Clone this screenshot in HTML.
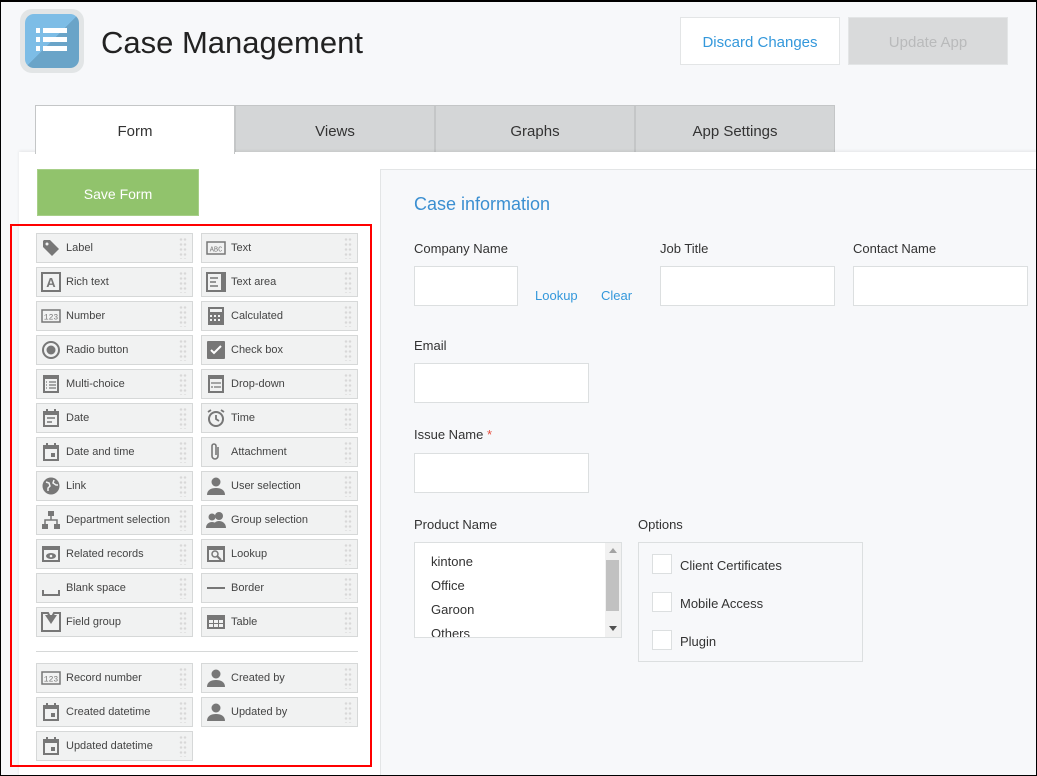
<!DOCTYPE html>
<html><head><meta charset="utf-8"><style>
*{box-sizing:border-box;margin:0;padding:0}
body{width:1037px;height:776px;overflow:hidden;background:#f7f8fa;font-family:"Liberation Sans",sans-serif;color:#333;position:relative}
.frame{position:absolute;left:0;top:0;width:1037px;height:776px;border:1px solid #000;border-top-width:2px;z-index:10;pointer-events:none}
.abs{position:absolute}
.tab{position:absolute;top:105px;height:48px;width:200px;background:#d4d6d7;border:1px solid #c4c6c7;border-bottom:none;text-align:center;line-height:52px;font-size:15px;color:#333}
.item{position:absolute;width:157px;height:30px;background:#f1f2f2;border:1px solid #d6d8d8;font-size:11px;color:#444;line-height:29px;padding-left:29px}
.item svg{position:absolute;left:4px;top:4px}
.item .grip{position:absolute;right:5px;top:3px;width:8px;height:22px;background-image:radial-gradient(circle,#d8d8d8 0.8px,transparent 1.6px);background-size:4px 5px}
.lbl{position:absolute;font-size:13px;color:#333}
.inp{position:absolute;background:#fff;border:1px solid #dcdfe0;height:40px}
.cb{position:absolute;left:13px;width:20px;height:20px;background:#fff;border:1px solid #dcdfe0}
</style></head><body>
<div class="frame"></div>
<div class="abs" style="left:20px;top:9px;width:64px;height:64px;border-radius:12px;background:#e2e5e6"></div>
<div class="abs" style="left:25px;top:14px;width:54px;height:54px;border-radius:9px;background:linear-gradient(135deg,#7dbde6 50%,#6aa4c8 50%)">
<svg width="54" height="54"><rect x="11" y="14" width="4" height="5" fill="#fff"/><rect x="18" y="14" width="24" height="5" fill="#fff"/><rect x="11" y="23" width="4" height="5" fill="#fff"/><rect x="18" y="23" width="24" height="5" fill="#fff"/><rect x="11" y="32" width="4" height="5" fill="#fff"/><rect x="18" y="32" width="24" height="5" fill="#fff"/></svg></div>
<div class="abs" style="left:101px;top:25px;font-size:31px;color:#222">Case Management</div>
<div class="abs" style="left:680px;top:17px;width:160px;height:48px;background:#fff;border:1px solid #e3e5e6;color:#3498db;font-size:15px;text-align:center;line-height:50px">Discard Changes</div>
<div class="abs" style="left:848px;top:17px;width:160px;height:48px;background:#d9dadb;border:1px solid #e3e5e6;color:#b9babb;font-size:15px;text-align:center;line-height:50px">Update App</div>
<div class="tab" style="left:35px;background:#fff;height:49px;z-index:2">Form</div>
<div class="tab" style="left:235px">Views</div>
<div class="tab" style="left:435px">Graphs</div>
<div class="tab" style="left:635px">App Settings</div>
<div class="abs" style="left:19px;top:152px;width:1018px;height:624px;background:#fff;box-shadow:0 -1px 3px rgba(0,0,0,.08)"></div>
<div class="abs" style="left:37px;top:169px;width:162px;height:47px;background:#91c36c;border:1px solid #a7cf88;color:#fff;font-size:14px;text-align:center;line-height:48px">Save Form</div>
<div class="abs" style="left:380px;top:169px;width:657px;height:607px;background:#f7f8fa;border-left:1px solid #e3e5e6;border-top:1px solid #e3e5e6"></div>
<div class="abs" style="left:414px;top:194px;font-size:18px;color:#3b8fd1">Case information</div>
<div class="lbl" style="left:414px;top:241px">Company Name</div>
<div class="inp" style="left:414px;top:266px;width:104px"></div>
<div class="lbl" style="left:535px;top:288px;color:#3498db">Lookup</div>
<div class="lbl" style="left:601px;top:288px;color:#3498db">Clear</div>
<div class="lbl" style="left:660px;top:241px">Job Title</div>
<div class="inp" style="left:660px;top:266px;width:175px"></div>
<div class="lbl" style="left:853px;top:241px">Contact Name</div>
<div class="inp" style="left:853px;top:266px;width:175px"></div>
<div class="lbl" style="left:414px;top:338px">Email</div>
<div class="inp" style="left:414px;top:363px;width:175px"></div>
<div class="lbl" style="left:414px;top:427px">Issue Name <span style="color:#e74c3c">*</span></div>
<div class="inp" style="left:414px;top:453px;width:175px"></div>
<div class="lbl" style="left:414px;top:517px">Product Name</div>
<div class="inp" style="left:414px;top:542px;width:208px;height:96px;overflow:hidden">
<div style="position:absolute;left:16px;top:7px;font-size:13px;line-height:24px">kintone<br>Office<br>Garoon<br>Others</div>
<div style="position:absolute;right:0;top:0;width:16px;height:94px;background:#f1f1f1"></div>
<div style="position:absolute;right:2px;top:17px;width:13px;height:51px;background:#c1c1c1"></div>
<div style="position:absolute;right:4px;top:5px;border:4px solid transparent;border-bottom:5px solid #a3a3a3;border-top:0"></div>
<div style="position:absolute;right:4px;bottom:6px;border:4px solid transparent;border-top:5px solid #505050;border-bottom:0"></div>
</div>
<div class="lbl" style="left:638px;top:517px">Options</div>
<div class="abs" style="left:638px;top:542px;width:225px;height:120px;border:1px solid #dcdfe0">
<div class="cb" style="top:11px"></div><div class="lbl" style="left:41px;top:15px">Client Certificates</div>
<div class="cb" style="top:49px"></div><div class="lbl" style="left:41px;top:53px">Mobile Access</div>
<div class="cb" style="top:87px"></div><div class="lbl" style="left:41px;top:91px">Plugin</div>
</div>
<div class="abs" style="left:10px;top:224px;width:362px;height:543px;border:2px solid #f00"></div>
<div class="abs" style="left:36px;top:651px;width:322px;height:1px;background:#d6d8d8"></div>

<div class="item" style="left:36px;top:233px"><svg width="20" height="20"><path d="M2 3v6l9 9 7-7-9-9H3z" fill="#777"/><circle cx="6" cy="6" r="1.5" fill="#f1f2f2"/></svg>Label<i class="grip"></i></div>
<div class="item" style="left:201px;top:233px"><svg width="20" height="20"><rect x="1" y="4" width="18" height="12" fill="none" stroke="#777" stroke-width="1.5"/><text x="10" y="13.5" font-size="7" text-anchor="middle" fill="#777" font-family="Liberation Mono">ABC</text></svg>Text<i class="grip"></i></div>
<div class="item" style="left:36px;top:267px"><svg width="20" height="20"><rect x="1" y="1" width="18" height="18" fill="none" stroke="#777" stroke-width="2"/><text x="10" y="15" font-size="13" font-weight="bold" text-anchor="middle" fill="#777">A</text></svg>Rich text<i class="grip"></i></div>
<div class="item" style="left:201px;top:267px"><svg width="20" height="20"><rect x="1" y="1" width="18" height="18" fill="none" stroke="#777" stroke-width="2"/><path d="M4 6h8M4 10h6M4 14h8" stroke="#777" stroke-width="1.5"/><rect x="15" y="2" width="3" height="16" fill="#777"/></svg>Text area<i class="grip"></i></div>
<div class="item" style="left:36px;top:301px"><svg width="20" height="20"><rect x="1" y="4" width="18" height="12" fill="none" stroke="#777" stroke-width="1.5"/><text x="10" y="13.5" font-size="8" text-anchor="middle" fill="#777" font-family="Liberation Mono">123</text></svg>Number<i class="grip"></i></div>
<div class="item" style="left:201px;top:301px"><svg width="20" height="20"><rect x="2" y="1" width="16" height="18" fill="#777"/><rect x="4" y="3" width="12" height="3" fill="#f1f2f2"/><path d="M4 9h2v2H4zM8 9h2v2H8zM12 9h2v2h-2zM4 13h2v2H4zM8 13h2v2H8zM12 13h2v2h-2z" fill="#f1f2f2"/></svg>Calculated<i class="grip"></i></div>
<div class="item" style="left:36px;top:335px"><svg width="20" height="20"><circle cx="10" cy="10" r="8" fill="none" stroke="#777" stroke-width="2"/><circle cx="10" cy="10" r="4.5" fill="#777"/></svg>Radio button<i class="grip"></i></div>
<div class="item" style="left:201px;top:335px"><svg width="20" height="20"><rect x="1" y="1" width="18" height="18" rx="1" fill="#777"/><path d="M5 10l3 3 7-7" stroke="#fff" stroke-width="2" fill="none"/></svg>Check box<i class="grip"></i></div>
<div class="item" style="left:36px;top:369px"><svg width="20" height="20"><rect x="2" y="1" width="16" height="18" fill="#777"/><rect x="4" y="5" width="12" height="12" fill="#f1f2f2"/><path d="M5 8h1M8 8h7M5 11h1M8 11h7M5 14h1M8 14h7" stroke="#777" stroke-width="1.3"/></svg>Multi-choice<i class="grip"></i></div>
<div class="item" style="left:201px;top:369px"><svg width="20" height="20"><rect x="2" y="1" width="16" height="18" fill="#777"/><rect x="4" y="5" width="12" height="12" fill="#f1f2f2"/><path d="M5 9h10M5 13h2M8 13h7" stroke="#777" stroke-width="1.3"/></svg>Drop-down<i class="grip"></i></div>
<div class="item" style="left:36px;top:403px"><svg width="20" height="20"><rect x="2" y="3" width="16" height="16" fill="#777"/><rect x="5" y="1" width="2" height="4" fill="#777"/><rect x="13" y="1" width="2" height="4" fill="#777"/><rect x="4" y="7" width="12" height="10" fill="#f1f2f2"/><path d="M6 10h8M6 14h5" stroke="#777" stroke-width="1.5"/></svg>Date<i class="grip"></i></div>
<div class="item" style="left:201px;top:403px"><svg width="20" height="20"><circle cx="10" cy="11" r="7" fill="none" stroke="#777" stroke-width="2"/><path d="M10 7v4l3 2M2 4l3-2M18 4l-3-2" stroke="#777" stroke-width="1.8" fill="none"/></svg>Time<i class="grip"></i></div>
<div class="item" style="left:36px;top:437px"><svg width="20" height="20"><rect x="2" y="3" width="16" height="16" fill="#777"/><rect x="5" y="1" width="2" height="4" fill="#777"/><rect x="13" y="1" width="2" height="4" fill="#777"/><rect x="4" y="7" width="12" height="10" fill="#f1f2f2"/><rect x="10" y="11" width="4" height="4" fill="#777"/></svg>Date and time<i class="grip"></i></div>
<div class="item" style="left:201px;top:437px"><svg width="20" height="20"><path d="M12 5v9a3 3 0 0 1-6 0V4a2 2 0 0 1 4 0v9" stroke="#777" stroke-width="1.6" fill="none"/></svg>Attachment<i class="grip"></i></div>
<div class="item" style="left:36px;top:471px"><svg width="20" height="20"><circle cx="10" cy="10" r="8.5" fill="#777"/><path d="M5 6l3 1 1 3-2 2v3M13 4l-1 3 3 2 2 0" stroke="#f1f2f2" stroke-width="1.5" fill="none"/></svg>Link<i class="grip"></i></div>
<div class="item" style="left:201px;top:471px"><svg width="20" height="20"><circle cx="10" cy="6" r="4.5" fill="#777"/><path d="M1 19c0-5 4-7 9-7s9 2 9 7z" fill="#777"/></svg>User selection<i class="grip"></i></div>
<div class="item" style="left:36px;top:505px"><svg width="20" height="20"><rect x="7" y="1" width="6" height="5" fill="#777"/><rect x="1" y="14" width="6" height="5" fill="#777"/><rect x="13" y="14" width="6" height="5" fill="#777"/><path d="M10 6v4M4 14v-4h12v4" stroke="#777" stroke-width="1.5" fill="none"/></svg>Department selection<i class="grip"></i></div>
<div class="item" style="left:201px;top:505px"><svg width="20" height="20"><circle cx="6" cy="7" r="3.5" fill="#777"/><circle cx="13" cy="6" r="4" fill="#777"/><path d="M0 18c0-4 3-6 6-6s6 2 6 6zM7 18c0-5 3-7 6-7s7 2 7 7z" fill="#777"/></svg>Group selection<i class="grip"></i></div>
<div class="item" style="left:36px;top:539px"><svg width="20" height="20"><rect x="1" y="2" width="18" height="16" fill="#777"/><rect x="3" y="6" width="14" height="10" fill="#f1f2f2"/><ellipse cx="10" cy="12" rx="5" ry="3" fill="#777"/><circle cx="10" cy="12" r="1.3" fill="#f1f2f2"/></svg>Related records<i class="grip"></i></div>
<div class="item" style="left:201px;top:539px"><svg width="20" height="20"><rect x="1" y="2" width="18" height="16" fill="#777"/><rect x="3" y="6" width="14" height="10" fill="#f1f2f2"/><circle cx="9" cy="10" r="3" fill="none" stroke="#777" stroke-width="1.5"/><path d="M11 12l4 4" stroke="#777" stroke-width="2"/></svg>Lookup<i class="grip"></i></div>
<div class="item" style="left:36px;top:573px"><svg width="20" height="20"><path d="M2 12v5h16v-5" stroke="#777" stroke-width="2" fill="none"/></svg>Blank space<i class="grip"></i></div>
<div class="item" style="left:201px;top:573px"><svg width="20" height="20"><path d="M1 10h18" stroke="#777" stroke-width="2"/></svg>Border<i class="grip"></i></div>
<div class="item" style="left:36px;top:607px"><svg width="20" height="20"><path d="M1 1h6l3 6 3-6h6v18H1z" fill="none" stroke="#777" stroke-width="2"/><path d="M4 3l6 9 6-9z" fill="#777"/></svg>Field group<i class="grip"></i></div>
<div class="item" style="left:201px;top:607px"><svg width="20" height="20"><rect x="1" y="3" width="18" height="14" fill="#777"/><path d="M3 8h4v3H3zM8 8h4v3H8zM13 8h4v3h-4zM3 12h4v3H3zM8 12h4v3H8zM13 12h4v3h-4z" fill="#f1f2f2"/></svg>Table<i class="grip"></i></div>
<div class="item" style="left:36px;top:663px"><svg width="20" height="20"><rect x="1" y="4" width="18" height="12" fill="none" stroke="#777" stroke-width="1.5"/><text x="10" y="13.5" font-size="8" text-anchor="middle" fill="#777" font-family="Liberation Mono">123</text></svg>Record number<i class="grip"></i></div>
<div class="item" style="left:201px;top:663px"><svg width="20" height="20"><circle cx="10" cy="6" r="4.5" fill="#777"/><path d="M1 19c0-5 4-7 9-7s9 2 9 7z" fill="#777"/></svg>Created by<i class="grip"></i></div>
<div class="item" style="left:36px;top:697px"><svg width="20" height="20"><rect x="2" y="3" width="16" height="16" fill="#777"/><rect x="5" y="1" width="2" height="4" fill="#777"/><rect x="13" y="1" width="2" height="4" fill="#777"/><rect x="4" y="7" width="12" height="10" fill="#f1f2f2"/><rect x="10" y="11" width="4" height="4" fill="#777"/></svg>Created datetime<i class="grip"></i></div>
<div class="item" style="left:201px;top:697px"><svg width="20" height="20"><circle cx="10" cy="6" r="4.5" fill="#777"/><path d="M1 19c0-5 4-7 9-7s9 2 9 7z" fill="#777"/></svg>Updated by<i class="grip"></i></div>
<div class="item" style="left:36px;top:731px"><svg width="20" height="20"><rect x="2" y="3" width="16" height="16" fill="#777"/><rect x="5" y="1" width="2" height="4" fill="#777"/><rect x="13" y="1" width="2" height="4" fill="#777"/><rect x="4" y="7" width="12" height="10" fill="#f1f2f2"/><rect x="10" y="11" width="4" height="4" fill="#777"/></svg>Updated datetime<i class="grip"></i></div>
</body></html>
